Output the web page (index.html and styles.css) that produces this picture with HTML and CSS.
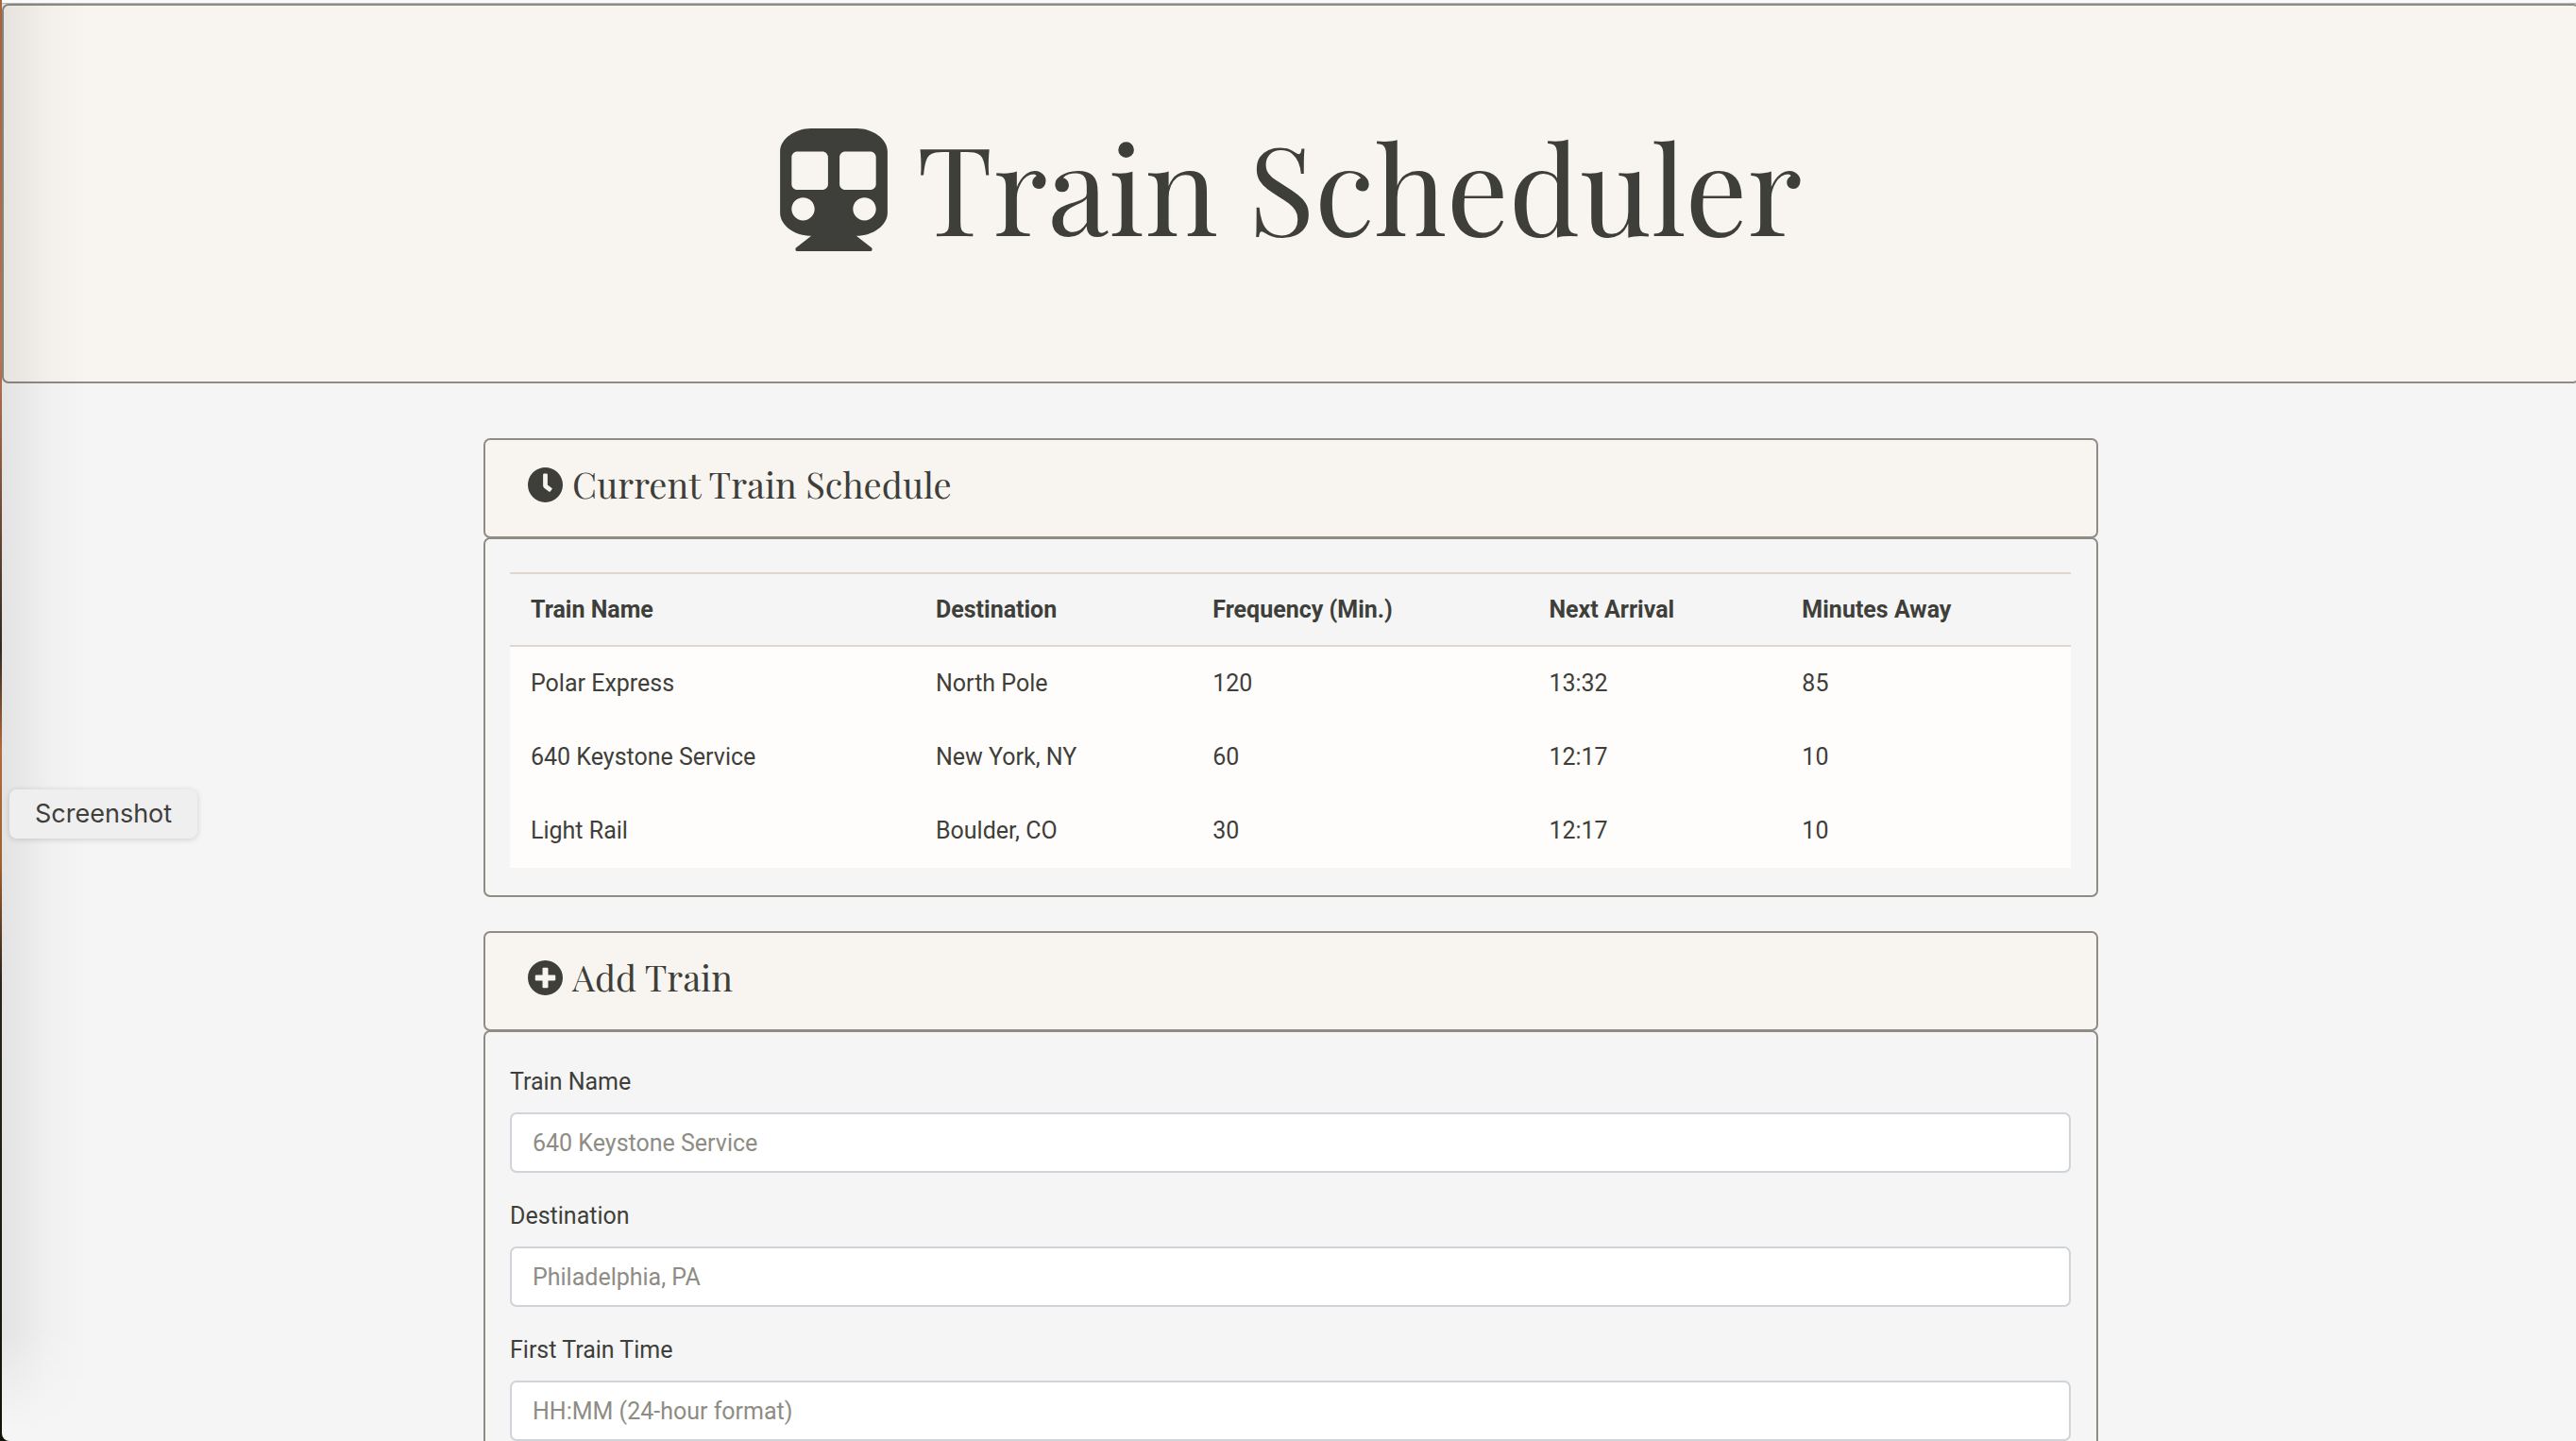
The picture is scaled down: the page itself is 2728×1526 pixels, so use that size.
FILE: index.html
```html
<!DOCTYPE html>
<html lang="en">
<head>
<meta charset="utf-8">
<meta name="viewport" content="width=device-width, initial-scale=1">
<title>Train Scheduler</title>
<link rel="stylesheet" href="styles.css">
</head>
<body>
<div class="window">
  <header class="hero">
    <svg class="hero-icon" viewBox="0 0 448 512" aria-hidden="true"><path d="M448 96v256c0 51.815-61.624 96-130.022 96l62.98 49.721C386.905 502.417 383.562 512 376 512H72c-7.578 0-10.892-9.594-4.957-14.279L130.022 448C61.82 448 0 403.954 0 352V96C0 42.981 64 0 128 0h192c65 0 128 42.981 128 96zM200 232V120c0-13.255-10.745-24-24-24H72c-13.255 0-24 10.745-24 24v112c0 13.255 10.745 24 24 24h104c13.255 0 24-10.745 24-24zm200 0V120c0-13.255-10.745-24-24-24H272c-13.255 0-24 10.745-24 24v112c0 13.255 10.745 24 24 24h104c13.255 0 24-10.745 24-24zm-48 56c-26.51 0-48 21.49-48 48s21.49 48 48 48 48-21.49 48-48-21.49-48-48-48zm-256 0c-26.51 0-48 21.49-48 48s21.49 48 48 48 48-21.49 48-48-21.49-48-48-48z"/></svg>
    <h1 class="hero-title">Train Scheduler</h1>
  </header>
  <main class="container">
    <section class="card">
      <div class="card-header">
        <svg class="card-icon" viewBox="8 8 496 496" aria-hidden="true"><path d="M256,8C119,8,8,119,8,256S119,504,256,504,504,393,504,256,393,8,256,8Zm92.49,313h0l-20,25a16,16,0,0,1-22.49,2.5h0l-67-49.72a40,40,0,0,1-15-31.23V112a16,16,0,0,1,16-16h32a16,16,0,0,1,16,16V256l58,42.5A16,16,0,0,1,348.49,321Z"/></svg>
        <h2 class="card-title">Current Train Schedule</h2>
      </div>
      <div class="card-body">
        <table class="schedule">
          <thead>
            <tr><th scope="col">Train Name</th><th scope="col">Destination</th><th scope="col">Frequency (Min.)</th><th scope="col">Next Arrival</th><th scope="col">Minutes Away</th></tr>
          </thead>
          <tbody>
            <tr><td>Polar Express</td><td>North Pole</td><td>120</td><td>13:32</td><td>85</td></tr>
            <tr><td>640 Keystone Service</td><td>New York, NY</td><td>60</td><td>12:17</td><td>10</td></tr>
            <tr><td>Light Rail</td><td>Boulder, CO</td><td>30</td><td>12:17</td><td>10</td></tr>
          </tbody>
        </table>
      </div>
    </section>
    <section class="card">
      <div class="card-header">
        <svg class="card-icon" viewBox="8 8 496 496" aria-hidden="true"><path d="M256 8C119 8 8 119 8 256s111 248 248 248 248-111 248-248S393 8 256 8zm144 276c0 6.600-5.400 12-12 12h-92v92c0 6.600-5.400 12-12 12h-56c-6.600 0-12-5.400-12-12v-92h-92c-6.600 0-12-5.400-12-12v-56c0-6.600 5.400-12 12-12h92v-92c0-6.600 5.400-12 12-12h56c6.600 0 12 5.400 12 12v92h92c6.600 0 12 5.400 12 12v56z"/></svg>
        <h2 class="card-title">Add Train</h2>
      </div>
      <form class="card-body form">
        <div class="field">
          <label for="train-name">Train Name</label>
          <input id="train-name" type="text" placeholder="640 Keystone Service">
        </div>
        <div class="field">
          <label for="destination">Destination</label>
          <input id="destination" type="text" placeholder="Philadelphia, PA">
        </div>
        <div class="field">
          <label for="first-time">First Train Time</label>
          <input id="first-time" type="text" placeholder="HH:MM (24-hour format)">
        </div>
      </form>
    </section>
  </main>
</div>
<div class="edge-shade"></div>
<div class="tooltip" role="tooltip">Screenshot</div>
</body>
</html>
```
FILE: styles.css
```css
*,
*::before,
*::after {
  box-sizing: border-box;
}

body {
  margin: 0;
  height: 100vh;
  overflow: hidden;
  padding-left: 2px;
  background: linear-gradient(#a5623c, #b87350 25%, #30281f 45%, #b06a3c 52%, #a0602f 60%, #2b2418 68%, #12140a);
  color: #3e3f3a;
  font: 25px/36px Roboto, sans-serif;
}

.window {
  height: 100%;
  margin-right: -4px;
  padding-top: 4px;
  overflow: hidden;
  border-bottom-left-radius: 8px;
  background: linear-gradient(#fafafa 3px, #b5b5b5 3px, #b5b5b5 4px, #f5f5f5 4px);
}

.hero {
  display: flex;
  align-items: center;
  justify-content: center;
  gap: 31px;
  height: 402px;
  padding-bottom: 8px;
  border: 2px solid #8e8c84;
  border-radius: 7px;
  background: #f8f5f0;
}

.hero-icon {
  width: 114px;
  height: 130px;
  fill: currentColor;
}

.hero-title,
.card-title {
  margin: 0;
  font-family: "Playfair Display", "Liberation Serif", serif;
  font-weight: 400;
}

.hero-title {
  padding-bottom: 10px;
  font-size: 130px;
  line-height: 160px;
}

.container {
  display: grid;
  gap: 36px;
  max-width: 1710px;
  margin: 58px auto 0;
}

.card-header,
.card-body {
  border: 2px solid #8e8c84;
  border-radius: 7px;
}

.card-header {
  display: flex;
  align-items: center;
  gap: 10px;
  height: 106px;
  padding: 0 45px 8px;
  background: #f8f5f0;
}

.card-icon {
  width: 37px;
  height: 37px;
  fill: currentColor;
}

.card-title {
  font-size: 38px;
  line-height: 50px;
}

.card-body {
  margin-top: -1px;
  padding: 35px 27px 29px 26px;
}

.schedule {
  width: 100%;
  border-collapse: separate;
  border-spacing: 0;
}

.schedule th,
.schedule td {
  height: 78px;
  padding: 0 21px 0 22px;
  text-align: left;
}

.schedule th {
  height: 79px;
  border: solid #dfd7ca;
  border-width: 2px 0;
  font-weight: 700;
}

.schedule td {
  background: #fefdfb;
}

.form {
  display: grid;
  gap: 28px;
}

.field {
  display: grid;
  gap: 14px;
}

.field input {
  width: 100%;
  height: 64px;
  padding: 0 22px;
  border: 2px solid #ced4da;
  border-radius: 7px;
  background: #fff;
  color: inherit;
  font: inherit;
}

.field input::placeholder {
  color: #8e8c84;
  opacity: 1;
}

.edge-shade {
  position: absolute;
  top: 4px;
  bottom: 0;
  left: 2px;
  width: 90px;
  background: linear-gradient(90deg, rgba(0, 0, 0, .07), rgba(0, 0, 0, .05) 25%, rgba(0, 0, 0, .02) 55%, transparent);
  mask-image: linear-gradient(#000 92%, transparent 99%);
  pointer-events: none;
}

.tooltip {
  position: absolute;
  top: 836px;
  left: 10px;
  padding: 7px 27px;
  border-radius: 8px;
  background: #efefef;
  box-shadow: 0 1px 6px rgba(0, 0, 0, .16);
  font: 27px/38px Inter, sans-serif;
}
```
